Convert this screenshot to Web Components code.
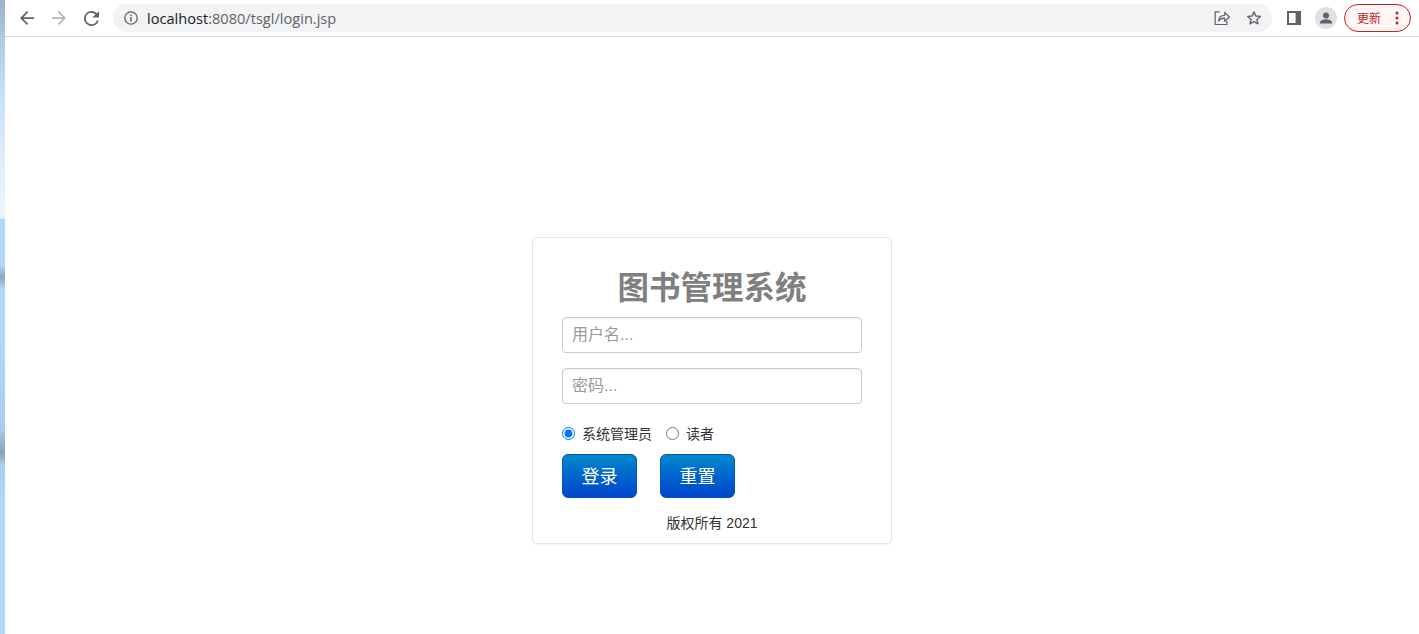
<!DOCTYPE html>
<html lang="zh-CN">
<head>
<meta charset="utf-8">
<title>图书管理系统</title>
<style>
    html, body
    {
        margin      : 0;
        height      : 100%;
        background  : #ffffff;
        font-family : "Liberation Sans", "Noto Sans CJK SC", sans-serif;
    }
</style>
</head>
<body>
<app-window>
    <browser-toolbar url-host="localhost" url-path=":8080/tsgl/login.jsp" update-label="更新"></browser-toolbar>
    <login-card>
        <span slot="title">图书管理系统</span>
        <text-field placeholder="用户名..."></text-field>
        <text-field placeholder="密码..."></text-field>
        <role-picker>
            <role-radio name="role" checked>系统管理员</role-radio>
            <role-radio name="role">读者</role-radio>
        </role-picker>
        <button-row>
            <blue-button>登录</blue-button>
            <blue-button>重置</blue-button>
        </button-row>
        <span slot="footer">版权所有 2021</span>
    </login-card>
</app-window>

<script>
class AppWindow extends HTMLElement
{
    constructor()
    {
        super();
        this.shadowDOM = this.attachShadow({mode:"open"});
    }

    connectedCallback()
    {
        this.render();
    }

    render()
    {
        this.shadowDOM.innerHTML =
        `
        <style>
            :host
            {
                display         : flex;
                height          : 100vh;
                overflow        : hidden;
            }

            /* edge of the desktop window behind the browser */
            .desktop-edge
            {
                flex            : 0 0 5px;
                background      : linear-gradient(to bottom,
                    #9fb2ca 0, #b0c9e6 40px, #cbe1f7 100px, #deedfb 160px, #ecf6fe 218px,
                    #b3d8fe 219px, #b3d8fe 265px, #8fa6bf 277px, #b3d8fe 289px,
                    #b0d4fa 360px, #a8cbef 430px, #8b9fb4 453px, #a9cdf3 465px,
                    #b3d8fe 510px, #b3d8fe 634px);
            }

            .main
            {
                flex            : 1;
                min-width       : 0;
                display         : flex;
                flex-direction  : column;
            }

            .page
            {
                flex            : 1;
                display         : flex;
                justify-content : center;
                align-items     : flex-start;
                padding-top     : 200px;
            }
        </style>

        <div class="desktop-edge"></div>
        <div class="main">
            <slot name="toolbar"></slot>
            <div class="page"><slot></slot></div>
        </div>`;

        const toolbar = this.querySelector("browser-toolbar");
        if (toolbar) toolbar.slot = "toolbar";
    }
}

class BrowserToolbar extends HTMLElement
{
    constructor()
    {
        super();
        this.shadowDOM = this.attachShadow({mode:"open"});
    }

    connectedCallback()
    {
        this.render();
    }

    render()
    {
        this.shadowDOM.innerHTML =
        `
        <style>
            :host
            {
                display         : flex;
                align-items     : center;
                height          : 36px;
                padding         : 0 8px 0 6px;
                border-bottom   : 1px solid #dadce0;
                background      : #ffffff;
                font-family     : "Open Sans", "Noto Sans CJK SC", sans-serif;
            }

            .btn
            {
                flex            : 0 0 32px;
                height          : 32px;
                display         : flex;
                align-items     : center;
                justify-content : center;
            }

            svg { display: block; }

            .omnibox
            {
                flex            : 1;
                height          : 28px;
                margin          : 0 6px;
                display         : flex;
                align-items     : center;
                padding         : 0 2px 0 2px;
                border-radius   : 14px;
                background      : #f1f3f4;
            }

            .info
            {
                flex            : 0 0 32px;
                display         : flex;
                justify-content : center;
            }

            .url
            {
                flex            : 1;
                font-size       : 14.6px;
                color           : #5f6368;
                white-space     : nowrap;
            }

            .url b
            {
                font-weight     : normal;
                color           : #202124;
            }

            .update
            {
                flex            : 0 0 67px;
                box-sizing      : border-box;
                height          : 28px;
                margin-left     : 2px;
                display         : flex;
                align-items     : center;
                padding         : 0 0 0 12px;
                border          : 1px solid #c5221f;
                border-radius   : 14px;
                background      : #fdf6f5;
                color           : #c5221f;
                font-size       : 12px;
            }

            .update span { flex: 1; }

            .dots
            {
                flex            : 0 0 26px;
                display         : flex;
                justify-content : center;
            }
        </style>

        <div class="btn">
            <svg width="14" height="14" viewBox="0 0 16 16" fill="#5f6368"><path d="M16 7H3.83l5.59-5.59L8 0 0 8l8 8 1.41-1.41L3.83 9H16z"/></svg>
        </div>
        <div class="btn">
            <svg width="14" height="14" viewBox="0 0 16 16" fill="#b4b6b9"><path d="M0 7h12.17L6.58 1.41 8 0l8 8-8 8-1.41-1.41L12.17 9H0z"/></svg>
        </div>
        <div class="btn">
            <svg width="15" height="15" viewBox="0 0 16 16" fill="#5f6368"><path d="M13.65 2.35A7.96 7.96 0 0 0 8 0a8 8 0 1 0 7.73 10h-2.08A6 6 0 1 1 8 2c1.66 0 3.14.69 4.22 1.78L9 7h7V0z"/></svg>
        </div>
        <div class="omnibox">
            <div class="info">
                <svg width="14" height="14" viewBox="0 0 14 14" fill="none" stroke="#5f6368" stroke-width="1.3"><circle cx="7" cy="7" r="6.2"/><path d="M7 6v4.400M7 3.400v1.600" stroke-width="1.500"/></svg>
            </div>
            <div class="url"><b>${this.getAttribute("url-host")}</b>${this.getAttribute("url-path")}</div>
            <div class="btn">
                <svg width="16" height="16" viewBox="0 0 16 16" fill="none" stroke="#5f6368" stroke-width="1.2"><path d="M5.6 1.900H1.200v12.600h11.600v-3.400"/><path d="M4.400 11c.5-3.600 3-5.600 6.300-5.600V2.400L15.300 7l-4.600 4.300V8.200c-2.500 0-4.800.8-6.300 2.800z" stroke-linejoin="round"/></svg>
            </div>
            <div class="btn">
                <svg width="16" height="16" viewBox="0 0 16 16" fill="none" stroke="#5f6368" stroke-width="1.4" stroke-linejoin="round"><path d="M8 1.900l1.800 4.100 4.500.4-3.400 3 1 4.400L8 11.500l-3.900 2.300 1-4.400-3.400-3 4.500-.4z"/></svg>
            </div>
        </div>
        <div class="btn">
            <svg width="14" height="14" viewBox="0 0 14 14"><path fill="#5f6368" d="M0 0h14v14H0z"/><path fill="#ffffff" d="M2 2h6.600v10H2z"/></svg>
        </div>
        <div class="btn">
            <svg width="22" height="22" viewBox="0 0 22 22"><circle cx="11" cy="11" r="11" fill="#dee1e6"/><circle cx="11" cy="8.400" r="3" fill="#5f6368"/><path fill="#5f6368" d="M5 15.400c0-2 4-3.100 6-3.100s6 1.100 6 3.100v1.100H5z"/></svg>
        </div>
        <div class="update">
            <span>${this.getAttribute("update-label")}</span>
            <div class="dots">
                <svg width="4" height="14" viewBox="0 0 4 14" fill="#c5221f"><circle cx="2" cy="2" r="1.500"/><circle cx="2" cy="7" r="1.500"/><circle cx="2" cy="12" r="1.500"/></svg>
            </div>
        </div>`;
    }
}

class LoginCard extends HTMLElement
{
    constructor()
    {
        super();
        this.shadowDOM = this.attachShadow({mode:"open"});
    }

    connectedCallback()
    {
        this.render();
    }

    render()
    {
        this.shadowDOM.innerHTML =
        `
        <style>
            :host
            {
                display         : block;
                box-sizing      : border-box;
                width           : 360px;
                height          : 307px;
                padding         : 29px 29px 0;
                border          : 1px solid #e5e5e5;
                border-radius   : 5px;
                background      : #ffffff;
                box-shadow      : 0 1px 2px rgba(0,0,0,.05);
            }

            h2
            {
                margin          : 0 0 8px;
                height          : 42px;
                line-height     : 36px;
                font-size       : 31.5px;
                font-weight     : bold;
                text-align      : center;
                color           : #808080;
                font-family     : "Noto Sans CJK SC", sans-serif;
            }

            .footer
            {
                margin-top      : 15px;
                line-height     : 20px;
                font-size       : 14px;
                text-align      : center;
                color           : #333333;
            }
        </style>

        <h2><slot name="title"></slot></h2>
        <slot></slot>
        <div class="footer"><slot name="footer"></slot></div>`;
    }
}

class TextField extends HTMLElement
{
    constructor()
    {
        super();
        this.shadowDOM = this.attachShadow({mode:"open"});
    }

    connectedCallback()
    {
        this.render();
    }

    render()
    {
        this.shadowDOM.innerHTML =
        `
        <style>
            :host
            {
                display         : block;
                margin-bottom   : 15px;
            }

            input
            {
                display         : block;
                box-sizing      : border-box;
                width           : 300px;
                height          : 36px;
                padding         : 4px 9px;
                border          : 1px solid #cccccc;
                border-radius   : 4px;
                outline         : none;
                box-shadow      : inset 0 1px 1px rgba(0,0,0,.075);
                font-size       : 16px;
                font-family     : "Liberation Sans", "Noto Sans CJK SC", sans-serif;
            }

            input::placeholder { color: #999999; opacity: 1; }
        </style>

        <input type="text" placeholder="${this.getAttribute("placeholder")}">`;
    }
}

class RolePicker extends HTMLElement
{
    constructor()
    {
        super();
        this.shadowDOM = this.attachShadow({mode:"open"});
    }

    connectedCallback()
    {
        this.render();
    }

    render()
    {
        this.shadowDOM.innerHTML =
        `
        <style>
            :host
            {
                display         : flex;
                align-items     : center;
                gap             : 14px;
                height          : 20px;
                margin-top      : 19px;
            }
        </style>

        <slot></slot>`;
    }
}

class RoleRadio extends HTMLElement
{
    constructor()
    {
        super();
        this.shadowDOM = this.attachShadow({mode:"open"});
    }

    connectedCallback()
    {
        this.render();
    }

    render()
    {
        const checked = this.hasAttribute("checked") ? "checked" : "";

        this.shadowDOM.innerHTML =
        `
        <style>
            :host
            {
                display         : inline-block;
                font-size       : 14px;
                color           : #333333;
            }

            label
            {
                display         : flex;
                align-items     : center;
                gap             : 7px;
            }

            input
            {
                width           : 13px;
                height          : 13px;
                margin          : 0;
            }
        </style>

        <label><input type="radio" name="${this.getAttribute("name")}" ${checked}><slot></slot></label>`;
    }
}

class ButtonRow extends HTMLElement
{
    constructor()
    {
        super();
        this.shadowDOM = this.attachShadow({mode:"open"});
    }

    connectedCallback()
    {
        this.render();
    }

    render()
    {
        this.shadowDOM.innerHTML =
        `
        <style>
            :host
            {
                display         : flex;
                gap             : 23px;
                margin-top      : 11px;
            }
        </style>

        <slot></slot>`;
    }
}

class BlueButton extends HTMLElement
{
    constructor()
    {
        super();
        this.shadowDOM = this.attachShadow({mode:"open"});
    }

    connectedCallback()
    {
        this.render();
    }

    render()
    {
        this.shadowDOM.innerHTML =
        `
        <style>
            :host
            {
                display         : block;
            }

            button
            {
                display         : block;
                width           : 75px;
                height          : 44px;
                padding         : 0 0 2px;
                border          : 1px solid #0055bb;
                border-radius   : 6px;
                background      : linear-gradient(to bottom, #0088cc, #0044cc);
                color           : #ffffff;
                font-size       : 18px;
                font-family     : "Liberation Sans", "Noto Sans CJK SC", sans-serif;
            }
        </style>

        <button type="button"><slot></slot></button>`;
    }
}

customElements.define("app-window",AppWindow);
customElements.define("browser-toolbar",BrowserToolbar);
customElements.define("login-card",LoginCard);
customElements.define("text-field",TextField);
customElements.define("role-picker",RolePicker);
customElements.define("role-radio",RoleRadio);
customElements.define("button-row",ButtonRow);
customElements.define("blue-button",BlueButton);
</script>
</body>
</html>
